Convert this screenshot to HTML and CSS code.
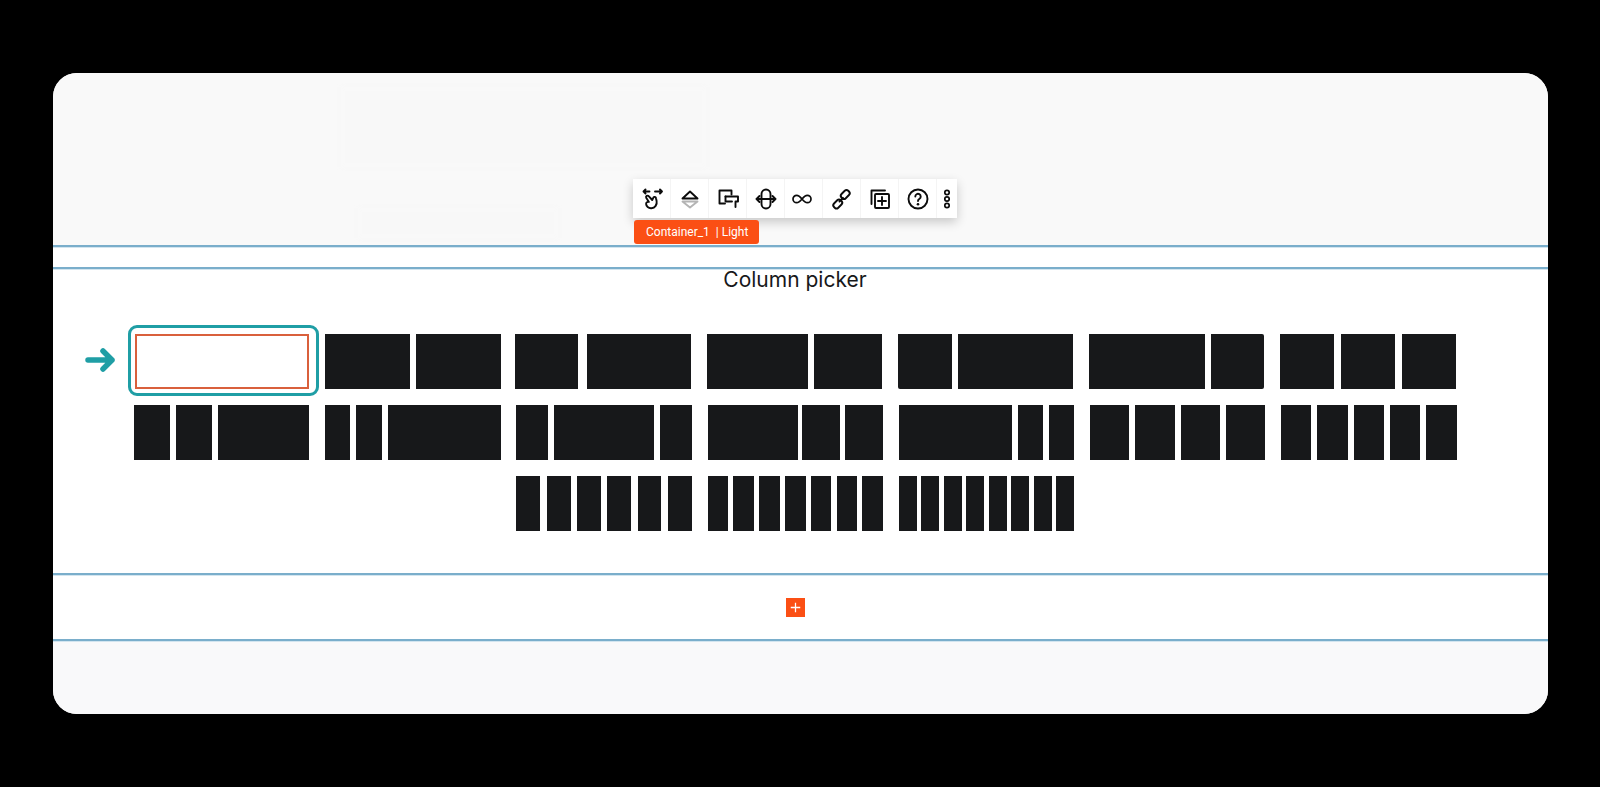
FILE: index.html
```html
<!DOCTYPE html>
<html lang="en">
<head>
<meta charset="utf-8">
<title>Column picker</title>
<link rel="stylesheet" href="styles.css">
</head>
<body>
<main class="card">
  <section class="top">
    <div class="ghost"></div>
    <div class="ghost ghost-low"></div>
    <div class="editor">
      <div class="toolbar">
        <button class="tool"><svg class="ico" viewBox="0 0 24 24"><path d="M9.500 4.500H3.500M5.500 2.500l-2 2 2 2M15 4.500h7M20 2.500l2 2-2 2"/><path d="M6.200 10.800a1.500 1.500 0 0 1 2.500-1.600l3.500 3.800 1.200-2.400a1.400 1.400 0 0 1 2.600.6l.6 2.800c.7 3.500-1.500 7-5.200 7.200-3 .2-5.200-1.900-5.300-4.300 0-1.300 1.200-2.200 2.800-2z"/></svg></button>
        <button class="tool"><svg class="ico" viewBox="0 0 24 24"><path d="M4.500 11.500 12 4.500l7.500 7z"/><path class="faded" d="M4.500 14.500h15L12 20.500z"/></svg></button>
        <button class="tool"><svg class="ico" viewBox="0 0 24 24"><path d="M15.500 7.500V3.500H3.500V16.500H9"/><path d="M9.500 9.500H22V14.500H19.500V20"/><path d="M9.500 9.500V14.500H16"/></svg></button>
        <button class="tool"><svg class="ico" viewBox="0 0 24 24"><rect x="7.500" y="2.500" width="9" height="19" rx="4.500"/><path d="M3 12h18M5.500 9l-3 3 3 3M18.500 9l3 3-3 3"/></svg></button>
        <button class="tool"><svg class="ico thin" viewBox="0 0 24 24"><path d="M10 12c-2-2.500-3.500-3.700-5.300-3.700a3.700 3.700 0 0 0 0 7.400c1.800 0 3.300-1.200 5.300-3.700zm0 0c2 2.500 3.500 3.700 5.300 3.700a3.700 3.700 0 0 0 0-7.400c-1.800 0-3.300 1.200-5.300 3.700z"/></svg></button>
        <button class="tool"><svg class="ico" viewBox="0 0 24 24"><rect x="3" y="14" width="9.500" height="6" rx="2.500" transform="rotate(-45 7.750 17)"/><rect x="10.500" y="4.500" width="9.500" height="6" rx="2.500" transform="rotate(-45 15.250 7.500)"/><path d="M9.500 14.500l3.500-3.500"/></svg></button>
        <button class="tool"><svg class="ico" viewBox="0 0 24 24"><path d="M17 3.500H3.500V17"/><rect x="7" y="7" width="14" height="14" rx="1"/><path d="M14 10v8M10 14h8"/></svg></button>
        <button class="tool"><svg class="ico" viewBox="0 0 24 24"><circle cx="12" cy="12" r="9.500"/><path d="M9.300 9.500a2.700 2.700 0 1 1 4.200 2.300c-1 .6-1.500 1.100-1.500 2.200"/><path class="dot" d="M12 17.200v.1"/></svg></button>
        <button class="tool tool-more"><svg class="ico-more" viewBox="0 0 12 24"><circle cx="6" cy="5.500" r="2.200"/><circle cx="6" cy="12" r="2.200"/><circle cx="6" cy="18.500" r="2.200"/></svg></button>
      </div>
      <div class="tag">Container_1 &nbsp;| Light</div>
    </div>
  </section>

  <div class="strip"></div>

  <section class="picker">
    <h2 class="title">Column picker</h2>
    <div class="grid">
      <div class="opt opt-active">
        <svg class="pointer" viewBox="0 0 30 24"><path d="M3 12h24M18 3l9 9-9 9"/></svg>
        <span class="empty"></span>
      </div>
      <div class="opt"><i style="flex:84"></i><i style="flex:84"></i></div>
      <div class="opt g8 nudge"><i style="flex:63"></i><i style="flex:104"></i></div>
      <div class="opt nudge"><i style="flex:101"></i><i style="flex:68"></i></div>
      <div class="opt nudge"><i class="nick-bl" style="flex:54"></i><i style="flex:116"></i></div>
      <div class="opt g5 nudge"><i style="flex:117"></i><i class="nick-r" style="flex:54"></i></div>
      <div class="opt g7 nudge"><i style="flex:1"></i><i style="flex:1"></i><i style="flex:1"></i></div>

      <div class="opt"><i style="flex:36"></i><i style="flex:36"></i><i style="flex:92"></i></div>
      <div class="opt"><i style="flex:25"></i><i style="flex:26"></i><i style="flex:113"></i></div>
      <div class="opt"><i style="flex:32"></i><i style="flex:100"></i><i style="flex:32"></i></div>
      <div class="opt g4"><i style="flex:90"></i><i style="flex:38"></i><i style="flex:38"></i></div>
      <div class="opt"><i style="flex:113"></i><i style="flex:25"></i><i style="flex:25"></i></div>
      <div class="opt"><i style="flex:1"></i><i style="flex:1"></i><i style="flex:1"></i><i style="flex:1"></i></div>
      <div class="opt"><i style="flex:1"></i><i style="flex:1"></i><i style="flex:1"></i><i style="flex:1"></i><i style="flex:1"></i></div>

      <div class="opt col3 g65"><i></i><i></i><i></i><i></i><i></i><i></i></div>
      <div class="opt g5"><i></i><i></i><i></i><i></i><i></i><i></i><i></i></div>
      <div class="opt g45"><i></i><i></i><i></i><i></i><i></i><i></i><i></i><i></i></div>
    </div>
  </section>

  <section class="add">
    <button class="plus"><svg viewBox="0 0 18 18"><path d="M9 4.500v9M4.500 9h9"/></svg></button>
  </section>

  <section class="foot"></section>
</main>
</body>
</html>
```

FILE: styles.css
```css
* { box-sizing: border-box; }

html, body {
  margin: 0;
  height: 787px;
  overflow: hidden;
  background: #000;
  font-family: Inter, "Liberation Sans", sans-serif;
}

body { padding: 73px 52px 0 53px; }

.card {
  height: 641px;
  border-radius: 24px;
  overflow: hidden;
  background: #fff;
}

.top, .strip, .picker, .add { border-bottom: 2px solid #7aaecb; }
.strip, .picker, .add, .foot { border-top: 1px solid #d3e5ef; }

.top {
  position: relative;
  height: 174px;
  background: #f9f9f9;
}

.ghost {
  position: absolute;
  left: 288px;
  top: 14px;
  width: 365px;
  height: 80px;
  background: #f8f8f8;
  filter: blur(2px);
}

.ghost-low {
  left: 305px;
  top: 135px;
  width: 200px;
  height: 30px;
}

.editor {
  position: absolute;
  left: 580px;
  top: 106px;
}

.toolbar {
  display: flex;
  height: 39px;
  background: #fff;
  box-shadow: 0 4px 10px rgba(0, 0, 0, .2);
}

.tool {
  display: flex;
  align-items: center;
  justify-content: center;
  width: 38px;
  padding: 0;
  border: 0;
  border-right: 1px solid #f4f4f4;
  background: none;
}

.tool-more { width: 20px; border-right: 0; }

.ico {
  width: 24px;
  height: 24px;
  fill: none;
  stroke: #0c0c0c;
  stroke-width: 1.9;
  stroke-linecap: round;
  stroke-linejoin: round;
}

.ico.thin { stroke-width: 1.7; }
.ico .faded { stroke: #b4b4b4; }
.ico .dot { stroke-width: 2.6; }

.ico-more {
  width: 12px;
  height: 24px;
  fill: none;
  stroke: #0c0c0c;
  stroke-width: 1.7;
}

.tag {
  width: 125px;
  height: 24px;
  margin: 2px 0 0 1px;
  padding-left: 12px;
  border-radius: 3px;
  background: #fb4f14;
  color: #fff;
  font: 12px/24px Roboto, Inter, sans-serif;
  white-space: nowrap;
}

.strip {
  height: 22px;
  background: #fff;
}

.picker {
  height: 306px;
  padding: 0 0 0 81px;
  background: #fff;
}

.title {
  height: 66px;
  margin: -2px 0 0 -81px;
  padding-right: 11px;
  text-align: center;
  color: #17181a;
  font: 400 21px/24px Inter, sans-serif;
}

.grid {
  display: grid;
  grid-template-columns: repeat(7, 175.4px);
  grid-auto-rows: 55px;
  column-gap: 15.8px;
  row-gap: 16px;
}

.opt {
  position: relative;
  display: flex;
  gap: 6px;
}

.opt i {
  display: block;
  flex: 1;
  background: #17181a;
}

.opt.g4 { gap: 4.500px; }
.opt.g45 { gap: 4.400px; }
.opt.g5 { gap: 5.300px; }
.opt.g65 { gap: 6.400px; }
.opt.g7 { gap: 7px; }
.opt.g8 { gap: 8.500px; }
.col3 { grid-column-start: 3; }
.nudge { margin: 0 1px 0 -1px; }

.opt i.nick-bl { border-bottom-left-radius: 2px; }
.opt i.nick-r { border-radius: 0 2px 2px 0; }

.opt-active { padding-left: 1px; }

.opt-active::before {
  content: "";
  position: absolute;
  left: -6px;
  right: -10px;
  top: -9px;
  bottom: -7px;
  border: 3px solid #1f9ea5;
  border-radius: 9px;
}

.empty {
  display: block;
  width: 175px;
  height: 55px;
  border: 2px solid #d9603c;
  background: #fff;
}

.pointer {
  position: absolute;
  left: -49px;
  top: 14px;
  width: 30px;
  height: 24px;
  fill: none;
  stroke: #1f9ea5;
  stroke-width: 5.500;
  stroke-linecap: round;
  stroke-linejoin: round;
}

.add {
  display: flex;
  align-items: center;
  justify-content: center;
  height: 66px;
  padding-right: 11px;
  background: #fff;
}

.plus {
  display: block;
  width: 19px;
  height: 19px;
  padding: 0;
  border: 0;
  background: #fb4f14;
}

.plus svg {
  display: block;
  width: 19px;
  height: 19px;
  fill: none;
  stroke: #fff;
  stroke-width: 1.200;
}

.foot {
  height: 73px;
  background: #f9f9fa;
}
```
